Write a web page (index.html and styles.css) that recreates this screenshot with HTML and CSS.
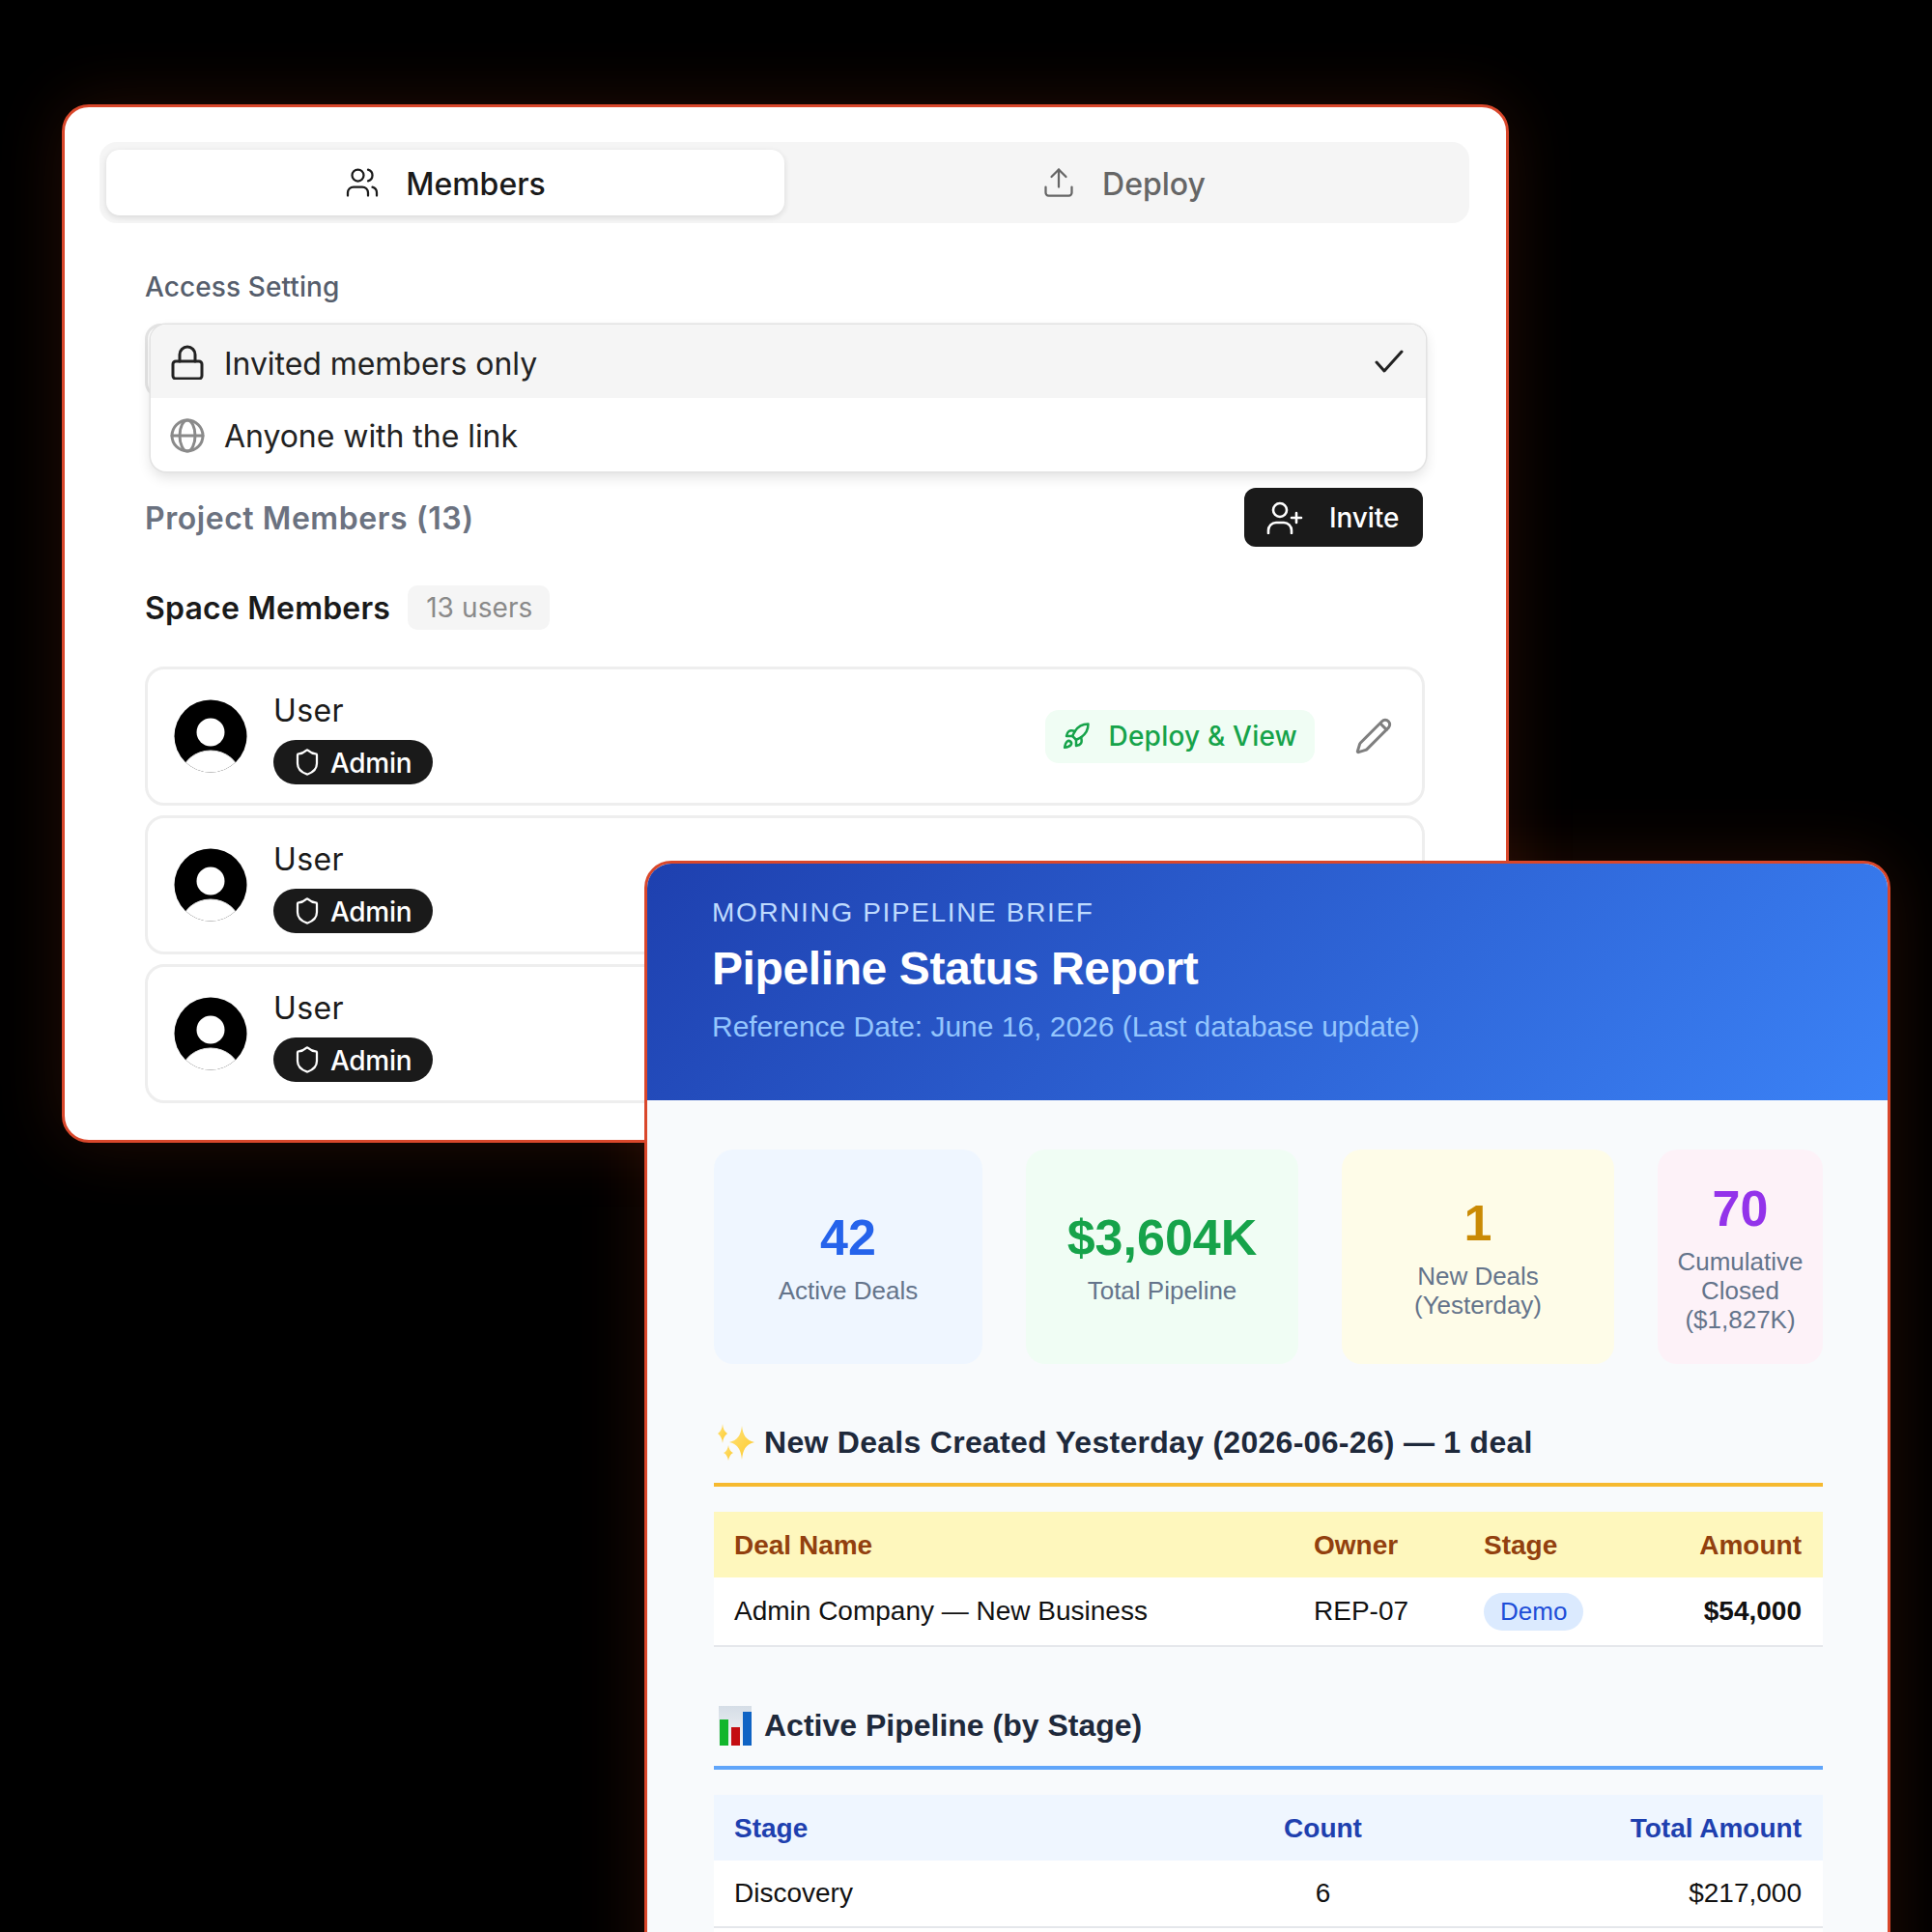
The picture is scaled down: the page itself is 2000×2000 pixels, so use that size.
FILE: index.html
```html
<!DOCTYPE html>
<html lang="en">
<head>
<meta charset="utf-8">
<title>Members and Pipeline Report</title>
<link rel="stylesheet" href="styles.css">
</head>
<body>
<div class="stage">
  <div class="report-glow"></div>
  <section class="window members-window">
    <div class="tabs">
      <div class="tab tab-active">
        <svg class="tab-icon" viewBox="0 0 24 24"><path d="M16 21v-2a4 4 0 0 0-4-4H6a4 4 0 0 0-4 4v2"/><circle cx="9" cy="7" r="4"/><path d="M22 21v-2a4 4 0 0 0-3-3.87"/><path d="M16 3.13a4 4 0 0 1 0 7.75"/></svg>
        <span>Members</span>
      </div>
      <div class="tab">
        <svg class="tab-icon" viewBox="0 0 24 24"><path d="M21 15v4a2 2 0 0 1-2 2H5a2 2 0 0 1-2-2v-4"/><path d="M17 8l-5-5-5 5"/><path d="M12 3v12"/></svg>
        <span>Deploy</span>
      </div>
    </div>
    <div class="members-content">
      <div class="field-label">Access Setting</div>
      <div class="select">
        <div class="select-trigger"></div>
        <div class="select-menu">
          <div class="option option-selected">
            <svg class="option-icon" viewBox="0 0 36 36"><rect x="3" y="17" width="30" height="18" rx="3"/><path d="M10 17v-7a8 8 0 0 1 16 0v7"/></svg>
            <span class="option-text">Invited members only</span>
            <svg class="check-icon" viewBox="0 0 32 24"><path d="M3 13l8 9L29 2"/></svg>
          </div>
          <div class="option">
            <svg class="option-icon globe" viewBox="0 0 36 36"><circle cx="18" cy="18" r="16"/><ellipse cx="18" cy="18" rx="8" ry="16"/><path d="M2 18h32"/></svg>
            <span class="option-text">Anyone with the link</span>
          </div>
        </div>
      </div>
      <div class="project-row">
        <div class="project-title">Project Members (13)</div>
        <button class="invite">
          <svg class="invite-icon" viewBox="0 0 38 34"><circle cx="14" cy="9" r="7"/><path d="M2 33v-3a8 8 0 0 1 8-8h8a8 8 0 0 1 8 8v3"/><path d="M31 12v10M26 17h10"/></svg>
          <span>Invite</span>
        </button>
      </div>
      <div class="space-row">
        <div class="space-title">Space Members</div>
        <div class="count-badge">13 users</div>
      </div>
      <div class="member-list">
        <div class="member">
          <svg class="avatar" viewBox="0 0 76 76"><defs><clipPath id="a1"><circle cx="38" cy="38" r="37.5"/></clipPath></defs><circle cx="38" cy="38" r="37.5" fill="#000"/><g clip-path="url(#a1)"><ellipse cx="38" cy="79" rx="30" ry="26" fill="#fff" stroke="#e6e6e6" stroke-width="1"/></g><circle cx="38" cy="34" r="14.5" fill="#fff"/></svg>
          <div class="member-info">
            <div class="member-name">User</div>
            <div class="role">
              <svg class="role-icon" viewBox="0 0 24 24"><path d="M20 13c0 5-3.500 7.500-7.660 8.950a1 1 0 0 1-.67-.01C7.500 20.500 4 18 4 13V6a1 1 0 0 1 1-1c2 0 4.500-1.200 6.240-2.720a1.170 1.170 0 0 1 1.520 0C14.510 3.810 17 5 19 5a1 1 0 0 1 1 1z"/></svg>
              <span>Admin</span>
            </div>
          </div>
          <div class="member-actions">
            <div class="permission">
              <svg class="rocket-icon" viewBox="0 0 24 24"><path d="M4.500 16.500c-1.500 1.260-2 5-2 5s3.740-.5 5-2c.71-.84.7-2.130-.09-2.910a2.180 2.180 0 0 0-2.910-.09z"/><path d="M12 15l-3-3a22 22 0 0 1 2-3.950A12.880 12.880 0 0 1 22 2c0 2.720-.78 7.500-6 11a22.350 22.350 0 0 1-4 2z"/><path d="M9 12H4s.55-3.030 2-4c1.620-1.080 5 0 5 0"/><path d="M12 15v5s3.030-.55 4-2c1.080-1.620 0-5 0-5"/></svg>
              <span>Deploy &amp; View</span>
            </div>
            <svg class="pencil-icon" viewBox="0 0 24 24"><path d="M21.174 6.812a1 1 0 0 0-3.986-3.987L3.842 16.174a2 2 0 0 0-.5.83l-1.321 4.352a.5.5 0 0 0 .623.622l4.353-1.32a2 2 0 0 0 .83-.497z"/><path d="M16.500 4.500l3.500 3.500"/></svg>
          </div>
        </div>
        <div class="member">
          <svg class="avatar" viewBox="0 0 76 76"><defs><clipPath id="a2"><circle cx="38" cy="38" r="37.5"/></clipPath></defs><circle cx="38" cy="38" r="37.5" fill="#000"/><g clip-path="url(#a2)"><ellipse cx="38" cy="79" rx="30" ry="26" fill="#fff" stroke="#e6e6e6" stroke-width="1"/></g><circle cx="38" cy="34" r="14.5" fill="#fff"/></svg>
          <div class="member-info">
            <div class="member-name">User</div>
            <div class="role">
              <svg class="role-icon" viewBox="0 0 24 24"><path d="M20 13c0 5-3.500 7.500-7.660 8.950a1 1 0 0 1-.67-.01C7.500 20.500 4 18 4 13V6a1 1 0 0 1 1-1c2 0 4.500-1.200 6.240-2.720a1.170 1.170 0 0 1 1.520 0C14.510 3.810 17 5 19 5a1 1 0 0 1 1 1z"/></svg>
              <span>Admin</span>
            </div>
          </div>
        </div>
        <div class="member">
          <svg class="avatar" viewBox="0 0 76 76"><defs><clipPath id="a3"><circle cx="38" cy="38" r="37.5"/></clipPath></defs><circle cx="38" cy="38" r="37.5" fill="#000"/><g clip-path="url(#a3)"><ellipse cx="38" cy="79" rx="30" ry="26" fill="#fff" stroke="#e6e6e6" stroke-width="1"/></g><circle cx="38" cy="34" r="14.5" fill="#fff"/></svg>
          <div class="member-info">
            <div class="member-name">User</div>
            <div class="role">
              <svg class="role-icon" viewBox="0 0 24 24"><path d="M20 13c0 5-3.500 7.500-7.660 8.950a1 1 0 0 1-.67-.01C7.500 20.500 4 18 4 13V6a1 1 0 0 1 1-1c2 0 4.500-1.200 6.240-2.720a1.170 1.170 0 0 1 1.520 0C14.510 3.810 17 5 19 5a1 1 0 0 1 1 1z"/></svg>
              <span>Admin</span>
            </div>
          </div>
        </div>
      </div>
    </div>
  </section>

  <section class="window report-window">
    <header class="report-header">
      <div class="eyebrow">MORNING PIPELINE BRIEF</div>
      <h1 class="report-title">Pipeline Status Report</h1>
      <div class="report-date">Reference Date: June 16, 2026 (Last database update)</div>
    </header>
    <div class="report-body">
      <div class="stats">
        <div class="stat stat-blue"><div class="stat-value">42</div><div class="stat-label">Active Deals</div></div>
        <div class="stat stat-green"><div class="stat-value">$3,604K</div><div class="stat-label">Total Pipeline</div></div>
        <div class="stat stat-yellow"><div class="stat-value">1</div><div class="stat-label">New Deals<br>(Yesterday)</div></div>
        <div class="stat stat-pink"><div class="stat-value">70</div><div class="stat-label">Cumulative<br>Closed<br>($1,827K)</div></div>
      </div>

      <h2 class="section-title section-amber">
        <svg class="emoji" viewBox="0 0 42 44"><defs><linearGradient id="spark" x1="0" y1="0" x2="1" y2="1"><stop offset="0" stop-color="#ffe27a"/><stop offset="1" stop-color="#fdc92b"/></linearGradient></defs><path fill="url(#spark)" d="M29 4c1 9 4 15 13 17-9 2-12 8-13 18-1-10-4-16-13-18 9-2 12-8 13-17z"/><path fill="url(#spark)" d="M9 2c.5 5 2 8 5 10-3 2-4.500 5-5 10-.5-5-2-8-5-10 3-2 4.500-5 5-10z"/><path fill="url(#spark)" d="M15 24c.5 4 2.500 7 5 8-2.500 1-4.500 4-5 8-.5-4-2.500-7-5-8 2.500-1 4.500-4 5-8z"/></svg>
        <span>New Deals Created Yesterday (2026-06-26) — 1 deal</span>
      </h2>
      <table class="data-table table-amber">
        <thead>
          <tr><th class="col-deal">Deal Name</th><th class="col-owner">Owner</th><th class="col-stage">Stage</th><th class="align-right">Amount</th></tr>
        </thead>
        <tbody>
          <tr class="row-tall"><td>Admin Company — New Business</td><td>REP-07</td><td><span class="stage-pill">Demo</span></td><td class="align-right strong">$54,000</td></tr>
        </tbody>
      </table>

      <h2 class="section-title section-blue">
        <svg class="emoji" viewBox="0 0 42 44"><defs><linearGradient id="chartbg" x1="0" y1="0" x2="0" y2="1"><stop offset="0" stop-color="#d5dde6"/><stop offset="1" stop-color="#f4f6f8"/></linearGradient></defs><rect x="5" y="1" width="34" height="41" fill="url(#chartbg)"/><rect x="6" y="15" width="9" height="27" fill="#12b62c"/><rect x="18" y="23" width="9" height="19" fill="#c40d12"/><rect x="30" y="7" width="9" height="35" fill="#0f63c4"/></svg>
        <span>Active Pipeline (by Stage)</span>
      </h2>
      <table class="data-table table-blue">
        <thead>
          <tr><th class="col-name">Stage</th><th class="col-count align-center">Count</th><th class="align-right">Total Amount</th></tr>
        </thead>
        <tbody>
          <tr><td>Discovery</td><td class="align-center">6</td><td class="align-right">$217,000</td></tr>
          <tr><td colspan="3"></td></tr>
        </tbody>
      </table>
    </div>
  </section>
</div>
</body>
</html>
```

FILE: styles.css
```css
* { box-sizing: border-box; }
html, body { margin: 0; padding: 0; background: #000; }
.stage {
  position: relative;
  width: 2000px;
  height: 2000px;
  overflow: hidden;
  background: #000;
  font-family: Inter, "Liberation Sans", sans-serif;
  color: #1a1a1a;
}
.window {
  position: absolute;
  border: 3px solid #d9472b;
}
.report-glow {
  position: absolute;
  left: 667px;
  top: 891px;
  width: 1290px;
  height: 1300px;
  border-radius: 28px;
  box-shadow: 0 0 70px rgba(226, 80, 30, .16);
}
.members-window {
  left: 64px;
  top: 108px;
  width: 1498px;
  height: 1075px;
  padding: 36px;
  border-radius: 28px;
  background: #fff;
  box-shadow: 0 0 70px rgba(226, 80, 30, .16);
}
.tabs {
  display: grid;
  grid-template-columns: 702px 702px;
  width: 1418px;
  height: 84px;
  padding: 8px 7px;
  border-radius: 18px;
  background: #f5f5f5;
}
.tab {
  display: flex;
  align-items: center;
  justify-content: center;
  gap: 27px;
  border-radius: 14px;
  font-size: 32px;
  font-weight: 500;
  color: #666;
}
.tab span { padding-top: 2px; }
.tab-active {
  background: #fff;
  color: #1a1a1a;
  box-shadow: 0 2px 6px rgba(0, 0, 0, .12);
}
.tab-icon {
  width: 36px;
  height: 36px;
  fill: none;
  stroke: currentColor;
  stroke-width: 1.5;
  stroke-linecap: round;
  stroke-linejoin: round;
}
.members-content {
  padding: 0 48px 0 47px;
}
.field-label {
  margin-top: 48px;
  height: 36px;
  line-height: 36px;
  font-size: 28px;
  font-weight: 500;
  letter-spacing: .1px;
  color: #565e6c;
}
.select {
  position: relative;
  margin-top: 20px;
  height: 77px;
}
.select-trigger {
  height: 77px;
  border: 3px solid #e5e5e5;
  border-radius: 16px;
  background: #fff;
}
.select-menu {
  position: absolute;
  left: 6px;
  top: 1px;
  width: 1320px;
  height: 152px;
  border-radius: 16px;
  background: #fff;
  box-shadow: 0 0 0 1.500px #e2e2e2, 0 6px 14px rgba(0, 0, 0, .12);
  overflow: hidden;
}
.option {
  display: flex;
  align-items: center;
  height: 76px;
  padding: 0 22px 0 20px;
  font-size: 32px;
  color: #222;
}
.option-selected { background: #f5f5f5; }
.option-text {
  margin-left: 20px;
  padding-top: 3px;
  flex: 1;
  letter-spacing: -.05px;
}
.option-selected .option-text { padding-top: 5px; }
.option-icon {
  width: 36px;
  height: 36px;
  margin-top: 2px;
  flex: none;
  fill: none;
  stroke: #222;
  stroke-width: 3;
  stroke-linecap: round;
  stroke-linejoin: round;
}
.globe { stroke: #8a8a8a; }
.check-icon {
  width: 32px;
  height: 24px;
  margin-top: -1px;
  fill: none;
  stroke: #222;
  stroke-width: 3;
  stroke-linecap: round;
  stroke-linejoin: round;
}
.project-row {
  display: flex;
  align-items: center;
  justify-content: space-between;
  margin-top: 93px;
}
.project-title {
  padding-top: 2px;
  font-size: 32px;
  font-weight: 600;
  letter-spacing: .55px;
  color: #6b7280;
}
.invite {
  display: flex;
  align-items: center;
  gap: 27px;
  width: 185px;
  height: 61px;
  margin-right: 2px;
  padding: 0 0 0 23px;
  border: 0;
  border-radius: 12px;
  background: #1a1a1a;
  color: #fff;
  font-family: inherit;
  font-size: 28px;
  font-weight: 500;
  letter-spacing: -.1px;
}
.invite-icon {
  width: 38px;
  height: 34px;
  flex: none;
  fill: none;
  stroke: #fff;
  stroke-width: 2.600;
  stroke-linecap: round;
  stroke-linejoin: round;
}
.space-row {
  display: flex;
  align-items: center;
  gap: 18px;
  margin-top: 40px;
  height: 46px;
}
.space-title {
  font-size: 32px;
  font-weight: 600;
  letter-spacing: .2px;
  color: #1a1a1a;
}
.count-badge {
  display: flex;
  align-items: center;
  height: 46px;
  padding: 0 18px 0 19px;
  border-radius: 10px;
  background: #f5f5f5;
  font-size: 28px;
  letter-spacing: .1px;
  color: #8a8a8a;
}
.member-list {
  display: flex;
  flex-direction: column;
  gap: 10px;
  margin-top: 38px;
}
.member {
  display: flex;
  align-items: center;
  height: 144px;
  padding: 0 30px 0 27px;
  border: 3px solid #eeeeee;
  border-radius: 20px;
  background: #fff;
}
.avatar {
  width: 76px;
  height: 76px;
  flex: none;
}
.member-info {
  margin-left: 27px;
  flex: 1;
}
.member-name {
  height: 48px;
  line-height: 48px;
  font-size: 32px;
  letter-spacing: .4px;
  color: #1a1a1a;
}
.role {
  display: inline-flex;
  align-items: center;
  gap: 9px;
  height: 46px;
  margin-top: 6px;
  padding: 0 22px 0 20px;
  border-radius: 23px;
  background: #1a1a1a;
  color: #fff;
  font-size: 28px;
  font-weight: 500;
  letter-spacing: -.3px;
}
.role span { padding-top: 2px; }
.role-icon {
  width: 30px;
  height: 30px;
  fill: none;
  stroke: #fff;
  stroke-width: 1.800;
  stroke-linecap: round;
  stroke-linejoin: round;
}
.member-actions {
  display: flex;
  align-items: center;
  gap: 41px;
}
.permission {
  display: flex;
  align-items: center;
  gap: 19px;
  height: 55px;
  padding: 0 18px 0 17px;
  border-radius: 14px;
  background: #f0fdf4;
  color: #16a34a;
  font-size: 28px;
  font-weight: 500;
  letter-spacing: .2px;
}
.rocket-icon {
  width: 30px;
  height: 30px;
  fill: none;
  stroke: #16a34a;
  stroke-width: 2;
  stroke-linecap: round;
  stroke-linejoin: round;
}
.pencil-icon {
  width: 40px;
  height: 40px;
  fill: none;
  stroke: #7f7f7f;
  stroke-width: 1.800;
  stroke-linecap: round;
  stroke-linejoin: round;
}

.report-window {
  left: 667px;
  top: 891px;
  width: 1290px;
  height: 1300px;
  border-radius: 28px;
  background: #f8fafc;
  font-family: "Liberation Sans", Arial, sans-serif;
  overflow: hidden;
}
.report-header {
  height: 245px;
  padding: 35px 67px 0;
  background: linear-gradient(135deg, #1e40af 0%, #3b82f6 100%);
}
.eyebrow {
  height: 30px;
  line-height: 31px;
  font-size: 28px;
  letter-spacing: 1.640px;
  color: #bfdbfe;
}
.report-title {
  margin: 16px 0 0;
  height: 56px;
  line-height: 56px;
  font-size: 48px;
  font-weight: 700;
  letter-spacing: -.4px;
  color: #fff;
}
.report-date {
  margin-top: 16px;
  height: 32px;
  line-height: 32px;
  font-size: 30px;
  letter-spacing: -.02px;
  color: #93c5fd;
}
.report-body {
  padding: 51px 67px 0 68px;
}
.stats {
  display: grid;
  grid-template-columns: 278px 282px 282px 171px;
  gap: 45px;
  margin-left: 1px;
}
.stat {
  display: flex;
  flex-direction: column;
  align-items: center;
  justify-content: center;
  height: 222px;
  border-radius: 20px;
  text-align: center;
}
.stat-value {
  height: 60px;
  line-height: 60px;
  font-size: 52px;
  font-weight: 700;
  margin-bottom: 10px;
}
.stat-label {
  line-height: 30px;
  font-size: 26px;
  color: #64748b;
}
.stat-blue { background: #eff6ff; }
.stat-blue .stat-value { color: #2563eb; }
.stat-green { background: #f0fdf4; }
.stat-green .stat-value { color: #16a34a; }
.stat-yellow { background: #fefce8; }
.stat-yellow .stat-value { color: #ca8a04; }
.stat-pink { background: #fdf2f8; }
.stat-pink .stat-value { color: #9333ea; }
.section-title {
  display: flex;
  align-items: center;
  gap: 10px;
  height: 67px;
  margin: 60px 0 0 1px;
  padding-bottom: 19px;
  font-size: 32px;
  font-weight: 700;
  color: #1e293b;
}
.section-title span { padding-bottom: 1px; }
.section-amber {
  border-bottom: 4px solid #f6b92f;
  letter-spacing: .28px;
}
.section-blue { border-bottom: 4px solid #60a5fa; }
.emoji {
  width: 42px;
  height: 44px;
  flex: none;
}
.data-table {
  width: 1148px;
  margin: 26px 0 0 1px;
  border-collapse: collapse;
  table-layout: fixed;
  background: #fff;
  font-size: 28px;
  color: #111;
}
.data-table th {
  height: 68px;
  padding: 2px 22px 0 21px;
  text-align: left;
  font-weight: 700;
}
.data-table td {
  height: 69px;
  padding: 0 22px 0 21px;
  border-bottom: 2px solid #e5e7eb;
}
.row-tall td { height: 71px; }
.table-amber th { background: #fef7bd; color: #92400e; }
.table-blue th { background: #eff6ff; color: #1e40af; }
.col-deal { width: 600px; }
.col-owner { width: 176px; }
.col-stage { width: 190px; }
.col-name { width: 552px; }
.col-count { width: 158px; }
.data-table .align-right { text-align: right; }
.data-table .align-center { text-align: center; }
.strong { font-weight: 700; }
.stage-pill {
  display: inline-block;
  height: 39px;
  line-height: 39px;
  padding: 0 17px;
  border-radius: 20px;
  background: #dbeafe;
  font-size: 26px;
  color: #1d4ed8;
}
```
